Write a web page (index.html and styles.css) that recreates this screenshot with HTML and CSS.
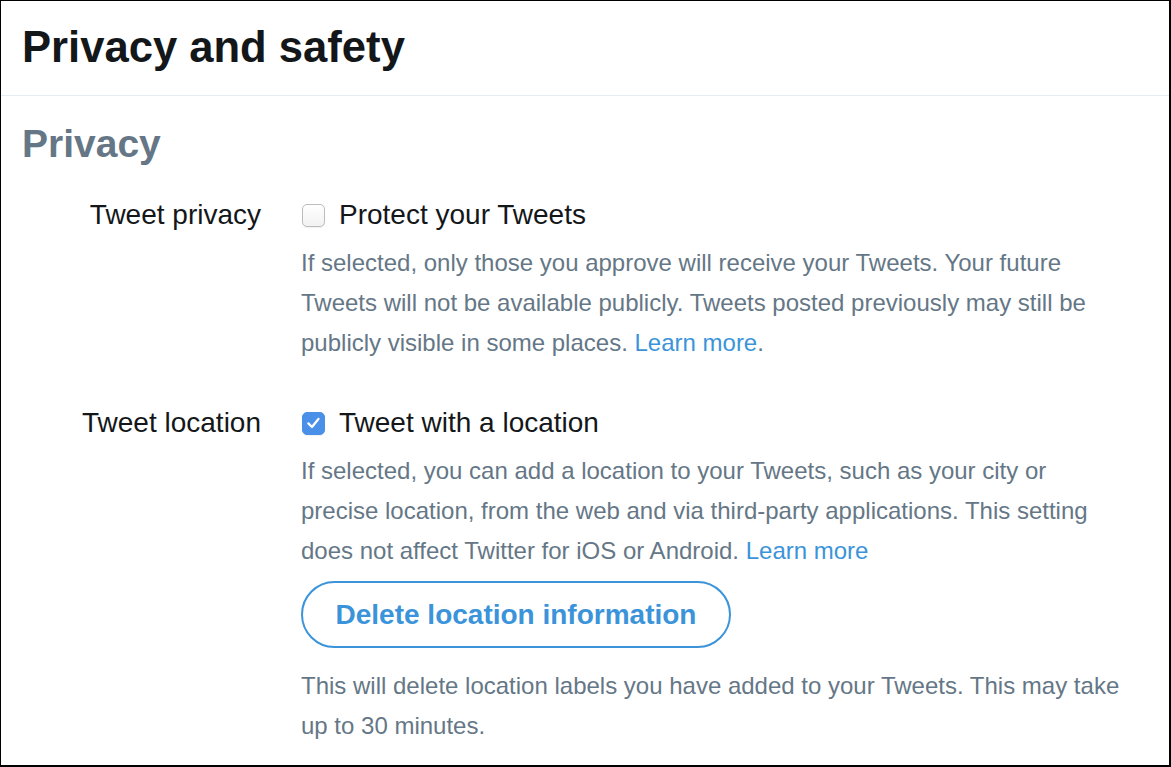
FILE: index.html
```html
<!DOCTYPE html>
<html>
<head>
<meta charset="utf-8">
<link rel="stylesheet" href="styles.css">
</head>
<body>
<div class="frame">
  <header class="page-header">
    <h1 class="page-title">Privacy and safety</h1>
  </header>
  <section class="section">
    <h2 class="section-title">Privacy</h2>
    <div class="setting">
      <div class="setting-label">Tweet privacy</div>
      <div class="setting-body">
        <label class="check-row">
          <span class="checkbox"></span>
          <span class="check-text">Protect your Tweets</span>
        </label>
        <p class="help">If selected, only those you approve will receive your Tweets. Your future Tweets will not be available publicly. Tweets posted previously may still be publicly visible in some places. <a class="link" href="#">Learn more</a>.</p>
      </div>
    </div>
    <div class="setting setting-location">
      <div class="setting-label">Tweet location</div>
      <div class="setting-body">
        <label class="check-row">
          <span class="checkbox checked">
            <svg viewBox="0 0 22 22" width="22" height="22"><path d="M5.6 11.4 L9.4 15.2 L16.2 6.8" fill="none" stroke="#fff" stroke-width="2.4" stroke-linecap="round" stroke-linejoin="round"/></svg>
          </span>
          <span class="check-text">Tweet with a location</span>
        </label>
        <p class="help">If selected, you can add a location to your Tweets, such as your city or precise location, from the web and via third-party applications. This setting does not affect Twitter for iOS or Android. <a class="link" href="#">Learn more</a></p>
        <button class="btn-outline" type="button">Delete location information</button>
        <p class="help help-after">This will delete location labels you have added to your Tweets. This may take up to 30 minutes.</p>
      </div>
    </div>
  </section>
</div>
</body>
</html>
```
FILE: styles.css
```css
* { box-sizing: border-box; }
html, body { margin: 0; padding: 0; background: #fff; }
body {
  font-family: "Liberation Sans", Arial, Helvetica, sans-serif;
  color: #14171a;
}
.frame {
  width: 1171px;
  height: 767px;
  border-style: solid;
  border-color: #000;
  border-width: 1px 2px 2px 1px;
  overflow: hidden;
  background: #fff;
}
.page-header {
  height: 95px;
  border-bottom: 1px solid #e6ecf0;
  display: flex;
  align-items: center;
  padding-left: 21px;
}
.page-title {
  margin: 0;
  font-size: 43.6px;
  font-weight: 700;
  line-height: 1;
  color: #14171a;
}
.section {
  padding: 29px 0 0 21px;
}
.section-title {
  margin: 0;
  font-size: 39px;
  line-height: 38px;
  font-weight: 700;
  color: #657786;
}
.setting {
  display: grid;
  grid-template-columns: 239px 1fr;
  column-gap: 40px;
  margin-top: 32px;
}
.setting-location {
  margin-top: 40px;
}
.setting-label {
  text-align: right;
  font-size: 28px;
  line-height: 40px;
  color: #14171a;
}
.setting-body {
  padding-right: 40px;
}
.check-row {
  display: flex;
  align-items: center;
  gap: 14px;
  font-size: 28px;
  line-height: 40px;
  color: #14171a;
}
.checkbox {
  width: 23px;
  height: 23px;
  margin-left: 1px;
  border: 1px solid #bcbcbc;
  border-radius: 5px;
  background: linear-gradient(#fff, #f2f2f2);
  box-shadow: 0 1px 1px rgba(0,0,0,0.06);
  flex: none;
  display: flex;
  align-items: center;
  justify-content: center;
}
.checkbox.checked {
  border-color: #4a8fe8;
  background: #4a8fe8;
}
.checkbox svg { display: block; }
.help {
  margin: 8px 0 0;
  font-size: 24px;
  line-height: 40px;
  color: #657786;
}
.link {
  color: #3b94d9;
  text-decoration: none;
}
.btn-outline {
  display: block;
  margin-top: 10px;
  height: 67px;
  width: 430px;
  border: 2px solid #3b94d9;
  border-radius: 34px;
  background: #fff;
  color: #3b94d9;
  font-family: "Liberation Sans", Arial, Helvetica, sans-serif;
  font-size: 28px;
  font-weight: 700;
  padding: 0;
}
.help-after {
  margin-top: 18px;
}
```
